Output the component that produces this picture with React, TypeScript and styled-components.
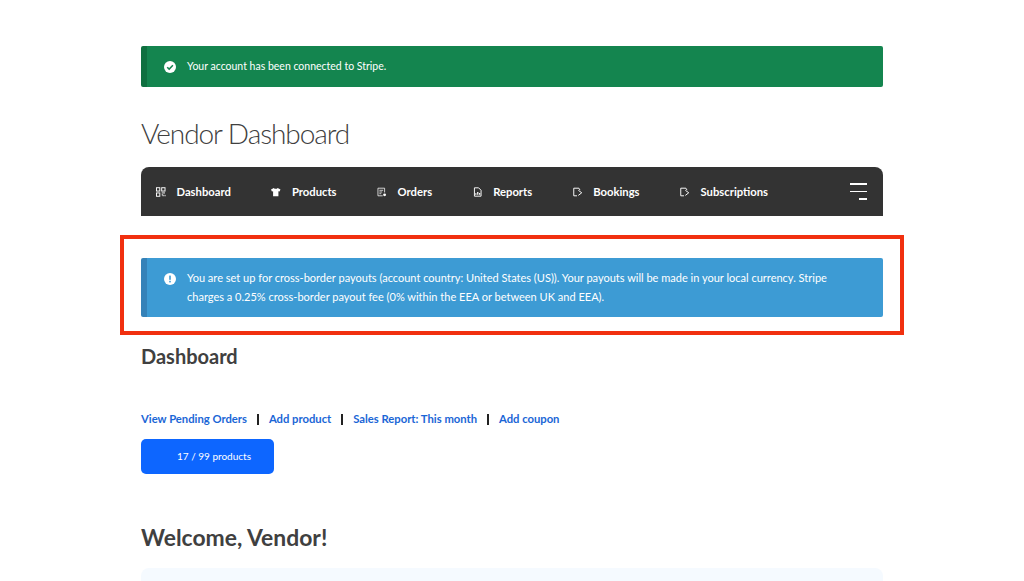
import * as React from 'react';
import styled, { createGlobalStyle } from 'styled-components';

const GlobalStyle = createGlobalStyle`
	html, body {
		margin: 0;
		padding: 0;
		background: #fff;
		height: 581px;
		overflow: hidden;
		font-family: Lato, "Liberation Sans", sans-serif;
		color: #404040;
	}
`;

const Page = styled.div`
	width: 742px;
	height: 581px;
	box-sizing: border-box;
	margin: 0 auto;
	padding-top: 46px;
	display: flex;
	flex-direction: column;
`;

const Notice = styled.div<{ $bg: string; $edge: string; $height: number; $size: number }>`
	display: flex;
	align-items: center;
	box-sizing: border-box;
	height: ${(p) => p.$height}px;
	padding: 0 40px 0 17px;
	background: ${(p) => p.$bg};
	border-left: 6px solid ${(p) => p.$edge};
	border-radius: 2px;
	color: #fff;
	font-size: ${(p) => p.$size}px;
	line-height: 18.5px;
`;

const NoticeIcon = styled.svg`
	flex: none;
	width: 12px;
	height: 12px;
	margin-right: 11px;
`;

const TopNoticeIcon = styled(NoticeIcon)`
	align-self: flex-start;
	margin-top: 15px;
`;

const Title = styled.h1`
	margin: 29px 0 0;
	font-size: 28px;
	line-height: 34px;
	font-weight: 300;
	letter-spacing: -1.07px;
	color: #404040;
`;

const Nav = styled.nav`
	display: flex;
	align-items: center;
	height: 49px;
	margin-top: 17px;
	padding: 0 16px 0 15px;
	background: #333;
	border-radius: 8px 8px 0 0;
`;

const NavItem = styled.a<{ $gap: number }>`
	display: flex;
	align-items: center;
	margin-right: ${(p) => p.$gap}px;
	color: #fff;
	font-size: 11.25px;
	font-weight: 700;
`;

const NavIcon = styled.svg`
	width: 9.5px;
	height: 10px;
	margin-right: 11px;
`;

const Burger = styled.div`
	margin-left: auto;
	display: flex;
	flex-direction: column;
	align-items: flex-end;
	gap: 6px;
`;

const BurgerLine = styled.span<{ $w: number }>`
	display: block;
	height: 1.5px;
	width: ${(p) => p.$w}px;
	background: #fff;
`;

const Highlighted = styled.div`
	position: relative;
	margin-top: 42px;
	&::after {
		content: '';
		position: absolute;
		left: -21px;
		right: -21px;
		top: -23px;
		bottom: -18px;
		border: 4px solid #f1300f;
	}
`;

const SectionTitle = styled.h2`
	margin: 27px 0 0;
	font-size: 20px;
	line-height: 24px;
	font-weight: 700;
	color: #404040;
`;

const Links = styled.div`
	display: flex;
	align-items: center;
	margin-top: 43px;
	font-size: 11.25px;
	line-height: 16px;
	font-weight: 700;
`;

const LinkItem = styled.a`
	color: #1a66d6;
`;

const Separator = styled.span`
	flex: none;
	width: 1.5px;
	height: 11px;
	margin: 0 10.2px;
	background: #222;
`;

const ProductsButton = styled.button`
	box-sizing: border-box;
	width: 133px;
	height: 35px;
	margin-top: 12px;
	padding: 0 0 2px 13px;
	border: 0;
	border-radius: 5px;
	background: #0d66ff;
	color: #fff;
	font-family: inherit;
	font-size: 10px;
`;

const Welcome = styled.h2`
	margin: 48px 0 0;
	font-size: 22.9px;
	line-height: 30px;
	font-weight: 700;
	color: #404040;
`;

const Panel = styled.div`
	flex: 1;
	margin-top: 16px;
	background: #f5faff;
	border-radius: 8px 8px 0 0;
`;

const CheckIcon = () => (
	<NoticeIcon viewBox="0 0 12 12">
		<circle cx="6" cy="6" r="6" fill="#fff" />
		<path d="M3.2 6.2 5.2 8.1 8.9 4.3" fill="none" stroke="#14854f" strokeWidth="1.5" />
	</NoticeIcon>
);

const InfoIcon = () => (
	<TopNoticeIcon viewBox="0 0 12 12">
		<circle cx="6" cy="6" r="6" fill="#fff" />
		<rect x="5.2" y="2.6" width="1.6" height="4.2" fill="#3d9bd4" />
		<rect x="5.2" y="7.8" width="1.6" height="1.6" fill="#3d9bd4" />
	</TopNoticeIcon>
);

const GridIcon = () => (
	<NavIcon viewBox="0 0 10 10" fill="none" stroke="#fff" strokeWidth="1">
		<rect x="0.5" y="0.5" width="3.5" height="3.5" />
		<rect x="6" y="0.5" width="3.5" height="3.5" />
		<rect x="0.5" y="6" width="3.5" height="3.5" />
		<path d="M6 6h3.5M6 8h1.5v1.5M9.5 8v1.5" />
	</NavIcon>
);

const ShirtIcon = () => (
	<NavIcon viewBox="0 0 10 10">
		<path d="M3 .8 0 2.4l1 2.2 1.2-.4V9.4h5.6V4.2l1.2.4 1-2.2L7 .8C6.5 2 3.5 2 3 .8Z" fill="#fff" />
	</NavIcon>
);

const OrdersIcon = () => (
	<NavIcon viewBox="0 0 10 10" fill="none" stroke="#fff" strokeWidth="0.8">
		<path d="M6 9H1V1h7v4.5" />
		<path d="M2.5 3.2h4M2.5 5h3M2.5 6.8h2" />
		<circle cx="8" cy="8" r="1.5" fill="#fff" stroke="none" />
	</NavIcon>
);

const ReportIcon = () => (
	<NavIcon viewBox="0 0 10 10" fill="none" stroke="#fff" strokeWidth="1">
		<path d="M1.5.6h4.4l2.6 2.6v6.2h-7Z" />
		<path d="M3 8V6.4M5 8V5M7 8V6" strokeWidth="1.3" />
	</NavIcon>
);

const TagIcon = () => (
	<NavIcon viewBox="0 0 10 10" fill="none" stroke="#fff" strokeWidth="1">
		<path d="M6.2 1H.8v8h3.4" />
		<path d="M6.2 1 7.4 3" />
		<path d="M5.6 3.2 9.2 5.8 5.6 8.6" />
	</NavIcon>
);

export default function App() {
	return (
		<>
			<GlobalStyle />
			<Page>
				<Notice $bg="#14854f" $edge="#0f7040" $height={41} $size={10.5}>
					<CheckIcon />
					Your account has been connected to Stripe.
				</Notice>
				<Title>Vendor Dashboard</Title>
				<Nav>
					<NavItem $gap={40.5}><GridIcon />Dashboard</NavItem>
					<NavItem $gap={40.5}><ShirtIcon />Products</NavItem>
					<NavItem $gap={40.5}><OrdersIcon />Orders</NavItem>
					<NavItem $gap={40.5}><ReportIcon />Reports</NavItem>
					<NavItem $gap={40.5}><TagIcon />Bookings</NavItem>
					<NavItem $gap={0}><TagIcon />Subscriptions</NavItem>
					<Burger>
						<BurgerLine $w={17} />
						<BurgerLine $w={17} />
						<BurgerLine $w={8} />
					</Burger>
				</Nav>
				<Highlighted>
					<Notice $bg="#3d9bd4" $edge="#3582b8" $height={59} $size={11.03}>
						<InfoIcon />
						<span>
							You are set up for cross-border payouts (account country: United States (US)). Your payouts will be made in your local currency. Stripe charges a 0.25% cross-border payout fee (0% within the EEA or between UK and EEA).
						</span>
					</Notice>
				</Highlighted>
				<SectionTitle>Dashboard</SectionTitle>
				<Links>
					<LinkItem>View Pending Orders</LinkItem>
					<Separator />
					<LinkItem>Add product</LinkItem>
					<Separator />
					<LinkItem>Sales Report: This month</LinkItem>
					<Separator />
					<LinkItem>Add coupon</LinkItem>
				</Links>
				<ProductsButton type="button">17 / 99 products</ProductsButton>
				<Welcome>Welcome, Vendor!</Welcome>
				<Panel />
			</Page>
		</>
	);
}
